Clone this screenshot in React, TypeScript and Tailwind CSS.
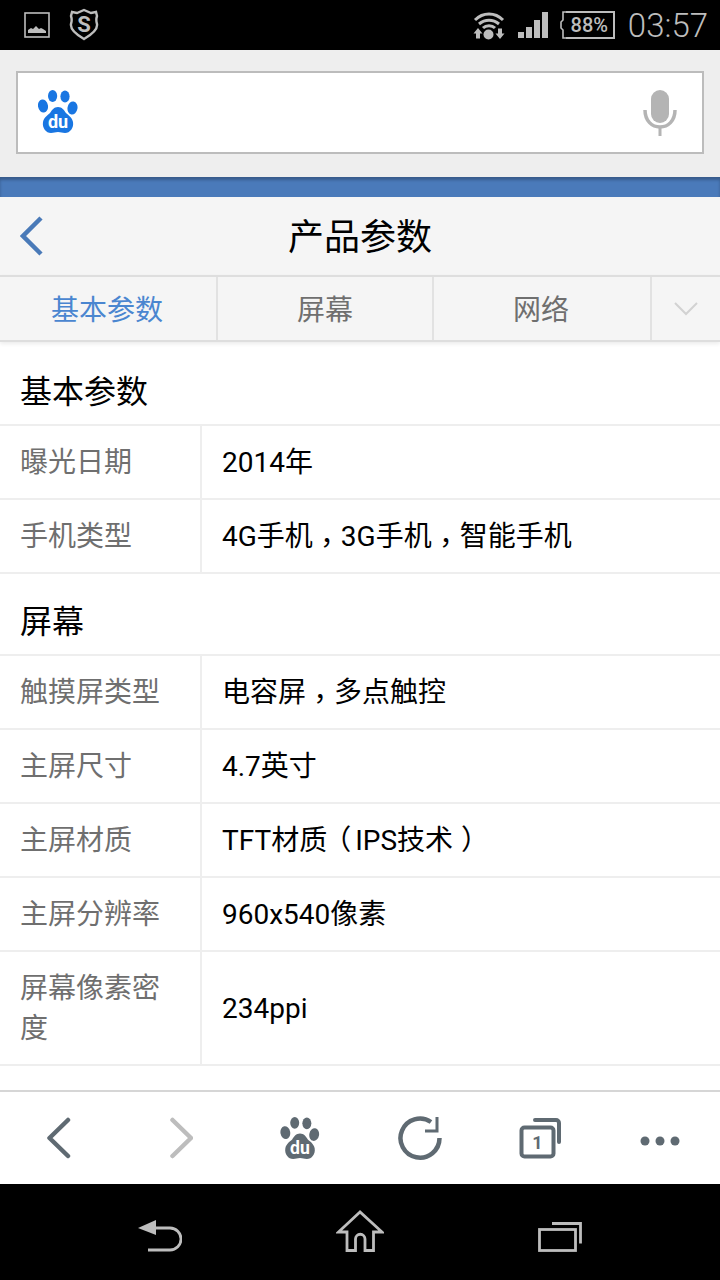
const FONT = "font-['Roboto','Noto_Sans_CJK_SC',sans-serif]";

const SECTIONS = [
  {
    title: '基本参数',
    rows: [
      { label: '曝光日期', value: '2014年' },
      { label: '手机类型', value: '4G手机，3G手机，智能手机' },
    ],
  },
  {
    title: '屏幕',
    rows: [
      { label: '触摸屏类型', value: '电容屏，多点触控' },
      { label: '主屏尺寸', value: '4.7英寸' },
      { label: '主屏材质', value: 'TFT材质（IPS技术）' },
      { label: '主屏分辨率', value: '960x540像素' },
      { label: '屏幕像素密度', value: '234ppi', tall: true },
    ],
  },
];

// the phone's fallback font centres full-width punctuation in its cell
function Value({ text }: { text: string }) {
  return (
    <>
      {text.split(/([，（）])/).map((part, i) => {
        if (part === '，') {
          return (
            <span key={i} className="inline-block translate-y-[7px] font-['Noto_Sans_CJK_TC'] leading-none">
              {part}
            </span>
          );
        }
        if (part === '（') {
          return (
            <span key={i} className="inline-block -translate-x-[4px] leading-none">
              {part}
            </span>
          );
        }
        if (part === '）') {
          return (
            <span key={i} className="inline-block translate-x-[8px] leading-none">
              {part}
            </span>
          );
        }
        return <span key={i}>{part}</span>;
      })}
    </>
  );
}

function Paw({ color, text, className }: { color: string; text: string; className: string }) {
  return (
    <svg viewBox="0 0 40 45" className={className}>
      <ellipse cx="14.600" cy="7" rx="4.600" ry="6" fill={color} />
      <ellipse cx="27" cy="7.500" rx="4.600" ry="6" fill={color} />
      <ellipse cx="5" cy="17" rx="5" ry="6.500" fill={color} transform="rotate(-10 5 17)" />
      <ellipse cx="34.500" cy="19" rx="5" ry="6.500" fill={color} transform="rotate(10 34.500 19)" />
      <path
        d="M20 18c-4 0-6 3-8 6-2 2-6 4-7 9-1 6 3 11 8 11 3 0 4-1 7-1s4 1 7 1c5 0 9-5 8-11-1-5-5-7-7-9-2-3-4-6-8-6z"
        fill={color}
      />
      <text x="20" y="39" textAnchor="middle" fontSize="18" fontWeight="700" fontFamily="Roboto" fill={text}>
        du
      </text>
    </svg>
  );
}

function StatusBar() {
  return (
    <div className="flex h-[50px] items-center bg-black pl-[24px] pr-[12px] text-[#bdbdbd]">
      <svg viewBox="0 0 26 26" className="h-[26px] w-[26px]">
        <rect x="1" y="1" width="24" height="24" fill="none" stroke="#bdbdbd" strokeWidth="1.600" />
        <path d="M4 21v-3l3-2 2 1 3-3 3 3 2-1 2 1 3 2v2z" fill="#bdbdbd" />
      </svg>
      <svg viewBox="0 0 30 34" className="ml-[19px] h-[34px] w-[30px]">
        <path
          d="M3 4l5 1 7-3 7 3 5-1 1 4c-1 3-1 5 0 8 1 6-6 11-13 15C8 27 1 22 2 16c1-3 1-5 0-8z"
          fill="none"
          stroke="#bdbdbd"
          strokeWidth="2.400"
        />
        <text x="15" y="24" textAnchor="middle" fontSize="22" fontWeight="700" fontFamily="Roboto" fill="#bdbdbd">
          S
        </text>
      </svg>
      <div className="flex-1" />
      <svg viewBox="0 0 32 30" className="h-[30px] w-[32px]">
        <path d="M2 10c8-8 20-8 28 0M6 14c6-5 14-5 20 0M10 18c3-3 9-3 12 0" fill="none" stroke="#bdbdbd" strokeWidth="3" />
        <circle cx="15.500" cy="24.500" r="5" fill="#bdbdbd" />
        <path d="M5 18l-4.500 5.500h2.500v5h4v-5h2.500zM27 29l4.500-5.500H29v-5h-4v5h-2.500z" fill="#bdbdbd" />
      </svg>
      <svg viewBox="0 0 30 26" className="ml-[13px] h-[26px] w-[30px]">
        <rect x="0" y="20" width="6" height="6" fill="#bdbdbd" />
        <rect x="8" y="15" width="6" height="11" fill="#bdbdbd" />
        <rect x="16" y="8" width="6" height="18" fill="#bdbdbd" />
        <rect x="24" y="0" width="6" height="26" fill="#bdbdbd" />
      </svg>
      <div className="ml-[12px] flex h-[28px] items-center">
        <svg viewBox="0 0 6 28" className="h-[28px] w-[6px]">
          <path d="M6 1H3v8L1 11v6l2 2v8h3" fill="none" stroke="#bdbdbd" strokeWidth="1.600" />
        </svg>
        <div className="flex h-[28px] w-[49px] items-center justify-center border-y-2 border-r-2 border-[#bdbdbd] text-[20px] leading-none font-medium">
          88%
        </div>
      </div>
      <span className="ml-[13px] text-[33px] leading-none font-light">03:57</span>
    </div>
  );
}

function SearchHeader() {
  return (
    <div className="h-[127px] bg-[#eeeeee] px-[16px] pt-[21px]">
      <div className="flex h-[83px] items-center justify-between border-2 border-[#bcbcbc] bg-white pl-[20px] pr-[25px]">
        <Paw color="#1976e2" text="#ffffff" className="-mt-[2px] h-[45px] w-[40px]" />
        <svg viewBox="0 0 34 46" className="h-[46px] w-[34px]">
          <rect x="8" y="0" width="18" height="33" rx="9" fill="#b4b4b4" />
          <path d="M2 20c0 11 7 17 15 17s15-6 15-17" fill="none" stroke="#b4b4b4" strokeWidth="3.500" />
          <rect x="15.500" y="36" width="3" height="10" fill="#b4b4b4" />
        </svg>
      </div>
    </div>
  );
}

function TitleBar() {
  return (
    <div className="flex h-[78px] items-center bg-[#f5f5f5] pl-[20px]">
      <svg viewBox="0 0 24 40" className="h-[40px] w-[24px]">
        <path d="M21 2L3 20l18 18" fill="none" stroke="#4a7ab8" strokeWidth="4.500" />
      </svg>
      <h1 className="-ml-[44px] flex-1 pt-[3px] text-center text-[36px] font-normal leading-none text-black">产品参数</h1>
    </div>
  );
}

function Tabs() {
  return (
    <div className="relative flex h-[67px] border-y-2 border-[#dedede] bg-[#f5f5f5] shadow-[0_2px_4px_rgba(0,0,0,0.08)]">
      <div className="flex w-[218px] items-center justify-center border-r-2 border-[#e2e2e2] pr-[2px] pt-[5px] text-[28px] text-[#4a86d0]">基本参数</div>
      <div className="flex w-[216px] items-center justify-center border-r-2 border-[#e2e2e2] pt-[5px] text-[28px] text-[#6f6f6f]">屏幕</div>
      <div className="flex w-[218px] items-center justify-center border-r-2 border-[#e2e2e2] pr-[2px] pt-[5px] text-[28px] text-[#6f6f6f]">网络</div>
      <div className="flex flex-1 items-center justify-center">
        <svg viewBox="0 0 24 14" className="h-[14px] w-[24px]">
          <path d="M1 1l11 11L23 1" fill="none" stroke="#d2d2d2" strokeWidth="2" />
        </svg>
      </div>
    </div>
  );
}

function SpecTable() {
  return (
    <div className="h-[748px] bg-white">
      {SECTIONS.map((s, i) => (
        <div key={s.title}>
          <div
            className={`flex h-[82px] items-center border-t-2 pl-[20px] pt-[16px] text-[32px] text-black ${
              i === 0 ? 'border-transparent' : 'border-[#eeeeee]'
            }`}
          >
            {s.title}
          </div>
          {s.rows.map((r) => (
            <div key={r.label} className={`flex border-t-2 border-[#eeeeee] ${r.tall ? 'h-[116px] border-b-2' : 'h-[74px]'}`}>
              <div className="flex w-[202px] items-center border-r-2 border-[#eeeeee] pl-[20px] pr-[30px] pt-[2px] text-[28px] leading-[40px] text-[#6f6f6f]">
                {r.label}
              </div>
              <div className="flex items-center pl-[20px] pt-[2px] text-[28px] leading-[40px] text-black">
                <div>
                  <Value text={r.value} />
                </div>
              </div>
            </div>
          ))}
        </div>
      ))}
    </div>
  );
}

function BottomBar() {
  return (
    <div className="flex h-[94px] items-center border-t-2 border-[#d6d6d6] bg-white">
      <div className="flex w-[120px] justify-center">
        <svg viewBox="0 0 26 42" className="h-[42px] w-[26px]">
          <path d="M21 3L2.500 21 21 39" fill="none" stroke="#5f6a72" strokeWidth="4.500" strokeLinecap="round" strokeLinejoin="round" />
        </svg>
      </div>
      <div className="flex w-[120px] justify-center">
        <svg viewBox="0 0 26 42" className="h-[42px] w-[26px]">
          <path d="M5.500 3L24 21 5.500 39" fill="none" stroke="#bdbdbd" strokeWidth="4.500" strokeLinecap="round" strokeLinejoin="round" />
        </svg>
      </div>
      <div className="flex w-[120px] justify-center">
        <Paw color="#5f6a72" text="#ffffff" className="h-[44px] w-[40px]" />
      </div>
      <div className="flex w-[120px] justify-center">
        <svg viewBox="0 0 44 46" className="h-[46px] w-[44px]">
          <path d="M33 7A19.500 19.500 0 1 0 41.500 23" fill="none" stroke="#5f6a72" strokeWidth="4.500" />
          <path d="M39 2v14H27" fill="none" stroke="#5f6a72" strokeWidth="3" />
        </svg>
      </div>
      <div className="flex w-[120px] justify-center">
        <svg viewBox="0 0 44 42" className="h-[42px] w-[44px]">
          <rect x="3.500" y="10.500" width="32" height="29" rx="3" fill="none" stroke="#5f6a72" strokeWidth="4" />
          <path d="M17 3h21a3 3 0 0 1 3 3v19" fill="none" stroke="#5f6a72" strokeWidth="4" strokeLinecap="round" />
          <text x="19.500" y="32" textAnchor="middle" fontSize="18" fontWeight="700" fontFamily="Roboto" fill="#5f6a72">
            1
          </text>
        </svg>
      </div>
      <div className="flex w-[120px] justify-center pt-[6px]">
        <svg viewBox="0 0 40 10" className="h-[10px] w-[40px]">
          <circle cx="5" cy="5" r="4.500" fill="#5f6a72" />
          <circle cx="20" cy="5" r="4.500" fill="#5f6a72" />
          <circle cx="35" cy="5" r="4.500" fill="#5f6a72" />
        </svg>
      </div>
    </div>
  );
}

function NavBar() {
  return (
    <div className="flex h-[96px] items-start justify-between bg-black pl-[138px] pr-[136px] pt-[25px]">
      <svg viewBox="0 0 44 32" className="mt-[11px] h-[32px] w-[44px]">
        <path d="M0 8l18-8v15z" fill="#bdbdbd" />
        <path d="M16 8h16a11 11 0 0 1 0 22H10" fill="none" stroke="#bdbdbd" strokeWidth="2.800" />
      </svg>
      <svg viewBox="0 0 48 44" className="h-[44px] w-[48px]">
        <path
          d="M24 3L2.500 23H11v18.500h8.500V30a4.750 4.750 0 0 1 9.500 0v11.500h8.500V23h8.500z"
          fill="none"
          stroke="#bdbdbd"
          strokeWidth="2.800"
        />
      </svg>
      <svg viewBox="0 0 46 30" className="mt-[13px] h-[30px] w-[46px]">
        <rect x="1.500" y="7.500" width="36" height="21" fill="none" stroke="#bdbdbd" strokeWidth="2.800" />
        <path d="M14 1.500h28.500v20" fill="none" stroke="#bdbdbd" strokeWidth="2.800" />
      </svg>
    </div>
  );
}

export default function App() {
  return (
    <div className={`h-[1280px] w-[720px] overflow-hidden ${FONT}`}>
      <StatusBar />
      <SearchHeader />
      <div className="h-[20px] bg-[#4a7aba] shadow-[inset_0_3px_3px_rgba(0,0,0,0.25)]" />
      <TitleBar />
      <Tabs />
      <SpecTable />
      <BottomBar />
      <NavBar />
    </div>
  );
}
